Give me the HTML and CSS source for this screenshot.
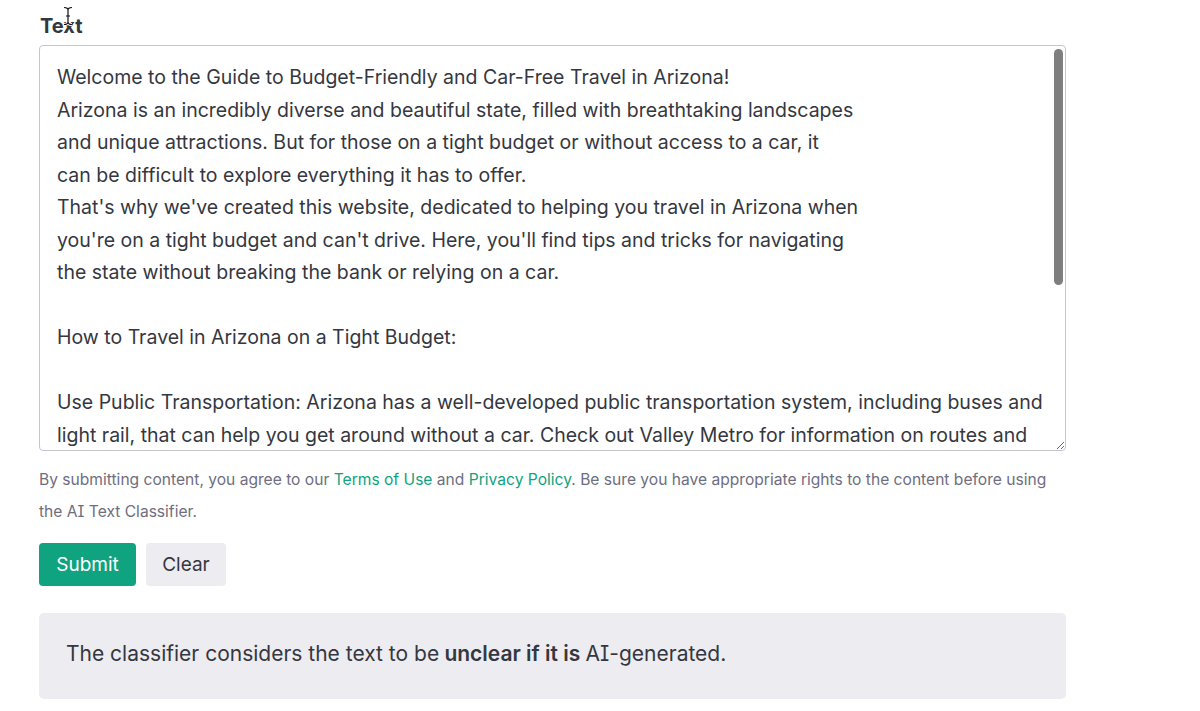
FILE: index.html
```html
<!DOCTYPE html>
<html lang="en">
<head>
<meta charset="utf-8">
<title>AI Text Classifier</title>
<link rel="stylesheet" href="styles.css">
</head>
<body>
<main class="page">
  <div class="field">
    <label class="label" for="txt">Text</label>
    <svg class="cursor" width="10" height="20" viewBox="0 0 10 20" aria-hidden="true">
      <path d="M1 1.5 Q5 1.5 5 4 L5 16 Q5 18.5 1 18.5 M9 1.5 Q5 1.5 5 4 M5 16 Q5 18.5 9 18.5 M3 10 H7" fill="none" stroke="#fff" stroke-width="3"/>
      <path d="M1 1.5 Q5 1.5 5 4 L5 16 Q5 18.5 1 18.5 M9 1.5 Q5 1.5 5 4 M5 16 Q5 18.5 9 18.5 M3 10 H7" fill="none" stroke="#111" stroke-width="1.2"/>
    </svg>
    <div class="area-wrap">
      <textarea id="txt" class="area" spellcheck="false">Welcome to the Guide to Budget-Friendly and Car-Free Travel in Arizona!
Arizona is an incredibly diverse and beautiful state, filled with breathtaking landscapes
and unique attractions. But for those on a tight budget or without access to a car, it
can be difficult to explore everything it has to offer.
That's why we've created this website, dedicated to helping you travel in Arizona when
you're on a tight budget and can't drive. Here, you'll find tips and tricks for navigating
the state without breaking the bank or relying on a car.

How to Travel in Arizona on a Tight Budget:

Use Public Transportation: Arizona has a well-developed public transportation system, including buses and light rail, that can help you get around without a car. Check out Valley Metro for information on routes and schedules.</textarea>
      <span class="thumb"></span>
    </div>
  </div>
  <p class="terms">By submitting content, you agree to our <a href="#">Terms of Use</a> and <a href="#">Privacy Policy</a>. Be sure you have appropriate rights to the content before using the AI Text Classifier.</p>
  <div class="actions">
    <button class="btn btn-primary" type="button">Submit</button>
    <button class="btn btn-secondary" type="button">Clear</button>
  </div>
  <div class="result">The classifier considers the text to be <strong>unclear if it is</strong> AI-generated.</div>
</main>
</body>
</html>
```

FILE: styles.css
```css
* { box-sizing: border-box; }
html, body { margin: 0; background: #fff; }
body {
  font-family: Inter, "Noto Sans", sans-serif;
  font-feature-settings: "cv08" 1;
  color: #353740;
}
.page {
  width: 1027px;
  margin-left: 39px;
  padding-top: 14px;
}
.field { position: relative; }
.label {
  display: block;
  font-size: 20px;
  font-weight: 700;
  line-height: 24px;
  padding-left: 1px;
  margin-bottom: 7px;
}
.cursor { position: absolute; left: 24px; top: -8px; }
.area-wrap { position: relative; }
.area {
  display: block;
  width: 100%;
  height: 406px;
  margin: 0;
  padding: 15px 20px 0 17px;
  border: 1px solid #c5c5d2;
  border-radius: 4px;
  font-family: inherit;
  font-feature-settings: "cv08" 1;
  font-size: 19.5px;
  line-height: 32.55px;
  color: #353740;
  resize: vertical;
  overflow: hidden;
  outline: none;
}
.thumb {
  position: absolute;
  right: 3px;
  top: 4px;
  width: 9px;
  height: 236px;
  border-radius: 5px;
  background: #7e7e7e;
}
.terms {
  margin: 13px 0 0;
  font-size: 15.6px;
  line-height: 32px;
  color: #6e6e80;
}
.terms a { color: #10a37f; text-decoration: none; }
.actions {
  display: flex;
  gap: 10px;
  margin-top: 15px;
}
.btn {
  font-family: inherit;
  font-size: 19px;
  height: 43px;
  border: none;
  border-radius: 4px;
  padding: 0 16px;
  cursor: pointer;
}
.btn-primary { background: #10a37f; color: #fff; width: 97px; }
.btn-secondary { background: #ececf1; color: #353740; width: 80px; }
.result {
  margin-top: 27px;
  background: #ececf1;
  border-radius: 5px;
  height: 86px;
  padding: 0 27px 6px;
  display: flex;
  align-items: center;
  font-size: 21px;
  color: #353740;
}
.result strong { font-weight: 600; margin: 0 0.25em; }
```
